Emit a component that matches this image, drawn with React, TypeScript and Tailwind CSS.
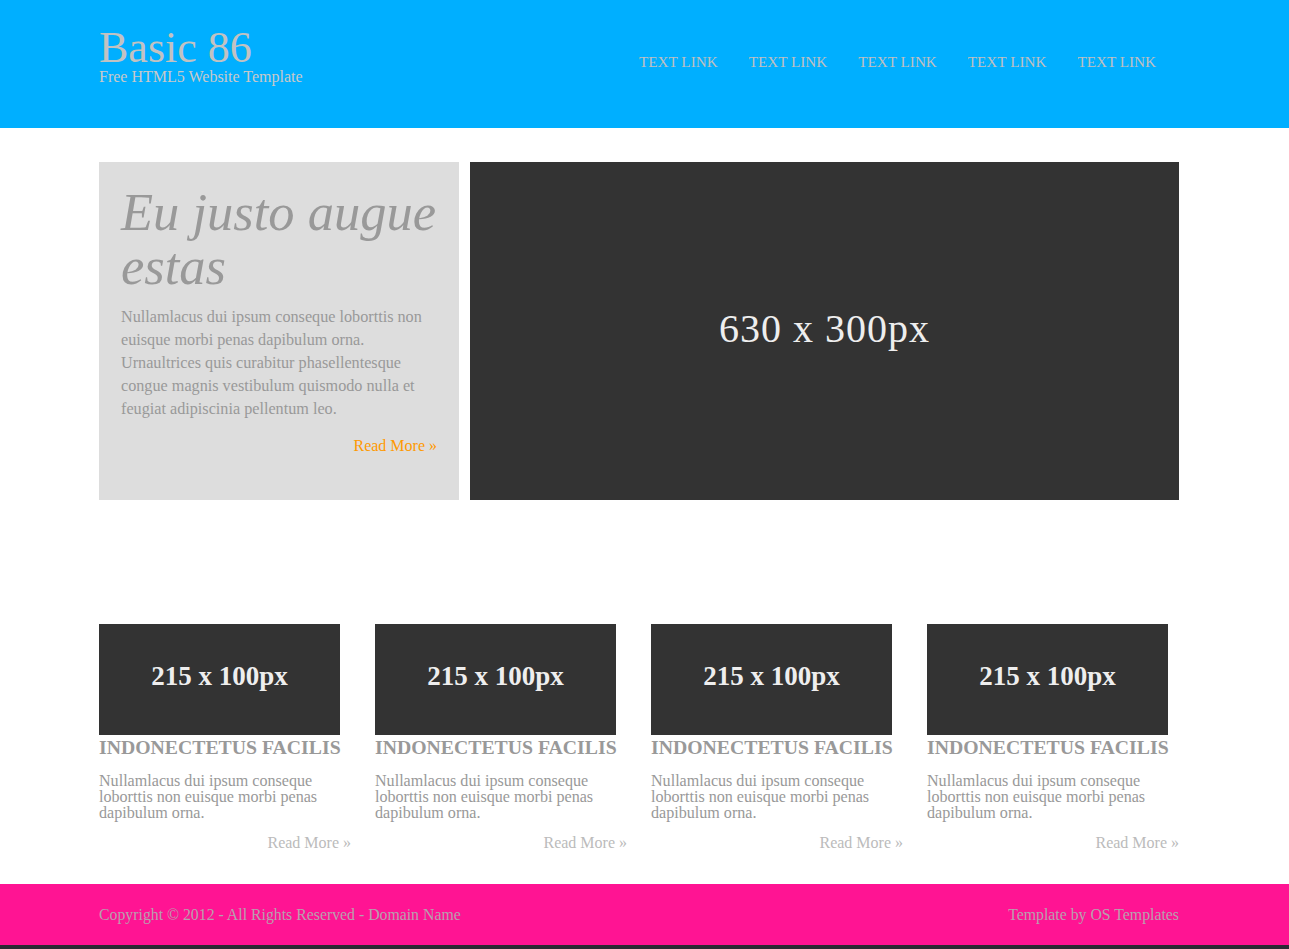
import React from 'react';

const serif = { fontFamily: '"Liberation Serif", "DejaVu Serif", serif' };

const links = ['TEXT LINK', 'TEXT LINK', 'TEXT LINK', 'TEXT LINK', 'TEXT LINK'];

function Placeholder({ label, className }: { label: string; className: string }) {
  return (
    <div className={`flex items-center justify-center bg-[#333333] text-[#eeeeee] ${className}`}>
      {label}
    </div>
  );
}

export default function App() {
  return (
    <div className="min-h-[949px] bg-white" style={serif}>
      <header className="h-[128px] bg-[#00afff]">
        <div className="ml-[99px] flex w-[1080px] items-start justify-between">
          <div className="pt-[26px]">
            <h1 className="text-[44px] leading-[43px] text-[#c2c2c2]">Basic 86</h1>
            <p className="text-[16px] leading-[16px] text-[#c9c9c9]">Free HTML5 Website Template</p>
          </div>
          <nav className="flex gap-[31px] pr-[23px] pt-[52px]">
            {links.map((l, i) => (
              <a key={i} href="#" className="text-[15.2px] leading-[20px] text-[#c0c0c0]">
                {l}
              </a>
            ))}
          </nav>
        </div>
      </header>

      <main className="ml-[99px] w-[1080px] pt-[34px]">
        <section className="flex h-[338px] gap-[11px]">
          <div className="flex w-[360px] flex-col bg-[#dddddd] pl-[22px] pr-[16px] pt-[23px]">
            <h2 className="text-[52.5px] italic leading-[54px] text-[#999999]">Eu justo augue estas</h2>
            <p className="mt-[13px] pr-[6px] text-[16.2px] leading-[23px] text-[#999999]">
              Nullamlacus dui ipsum conseque loborttis non euisque morbi penas dapibulum orna. Urnaultrices quis curabitur phasellentesque congue magnis vestibulum quismodo nulla et feugiat adipiscinia pellentum leo.
            </p>
            <a href="#" className="mr-[6px] mt-[15px] self-end text-[16px] leading-[20px] text-[#ff9900]">
              Read More &raquo;
            </a>
          </div>
          <Placeholder label="630 x 300px" className="flex-1 pb-[4px] text-[40px] tracking-[1px]" />
        </section>

        <section className="mt-[124px] grid grid-cols-4 gap-[24px]">
          {[0, 1, 2, 3].map((i) => (
            <article key={i} className="flex flex-col">
              <Placeholder label="215 x 100px" className="h-[111px] w-[241px] pb-[6px] text-[27px] font-bold" />
              <h3 className="mt-[1px] text-[19.75px] font-bold leading-[22px] text-[#999999]">INDONECTETUS FACILIS</h3>
              <p className="mt-[15px] pr-[10px] text-[16.1px] leading-[16px] text-[#999999]">
                Nullamlacus dui ipsum conseque loborttis non euisque morbi penas dapibulum orna.
              </p>
              <a href="#" className="mt-[12px] self-end text-[16px] leading-[20px] text-[#bbbbbb]">
                Read More &raquo;
              </a>
            </article>
          ))}
        </section>
      </main>

      <footer className="mt-[31px] border-b-[4px] border-[#2b2a33] bg-[#ff1493]">
        <div className="ml-[99px] flex h-[61px] w-[1080px] items-center justify-between text-[15.8px] text-[#b7a0ae]">
          <p>Copyright &copy; 2012 - All Rights Reserved - Domain Name</p>
          <p>Template by OS Templates</p>
        </div>
      </footer>
    </div>
  );
}
